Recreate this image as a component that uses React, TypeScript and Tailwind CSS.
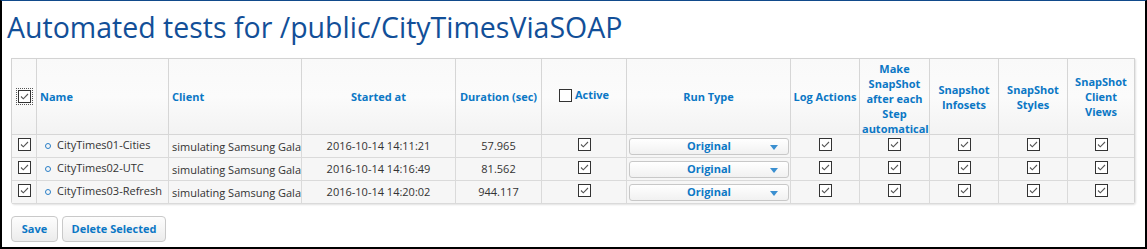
import React from "react";

const font = { fontFamily: '"Open Sans", "Noto Sans", sans-serif' };

type Test = { name: string; started: string; duration: string };

const tests: Test[] = [
  { name: "CityTimes01-Cities", started: "2016-10-14 14:11:21", duration: "57.965" },
  { name: "CityTimes02-UTC", started: "2016-10-14 14:16:49", duration: "81.562" },
  { name: "CityTimes03-Refresh", started: "2016-10-14 14:20:02", duration: "944.117" },
];

function Checkbox({ checked = true, focus = false }: { checked?: boolean; focus?: boolean }) {
  return (
    <span className={focus ? "inline-flex p-px outline-1 outline-dotted outline-[#555]" : "inline-flex"}>
      <span className="flex h-[13px] w-[13px] items-center justify-center border border-[#333] bg-white">
        {checked && (
          <svg viewBox="0 0 11 11" className="h-[11px] w-[11px]" aria-hidden>
            <path d="M2 5.5 L4.3 7.8 L9 3" fill="none" stroke="#555" strokeWidth="1.1" />
          </svg>
        )}
      </span>
    </span>
  );
}

function Head({
  children,
  left = false,
  className = "px-[3px]",
}: {
  children: React.ReactNode;
  left?: boolean;
  className?: string;
}) {
  return (
    <div
      className={`flex items-center overflow-hidden border-r border-b border-[#d6d6d6] bg-gradient-to-b from-[#f9f9f9] via-[#fbfbfb] to-[#f3f3f3] text-[11px] leading-[15px] font-bold text-[#0b77c5] ${
        left ? "justify-start" : "justify-center text-center"
      } ${className}`}
    >
      {children}
    </div>
  );
}

function Cell({
  children,
  className = "",
  last = false,
}: {
  children?: React.ReactNode;
  className?: string;
  last?: boolean;
}) {
  return (
    <div
      className={`flex h-[23px] items-center overflow-hidden whitespace-nowrap border-b border-[#dadada] bg-[#f6f6f6] text-[11px] text-[#333] ${
        last ? "" : "border-r"
      } ${className}`}
    >
      {children}
    </div>
  );
}

function RunType() {
  return (
    <div className="relative ml-[2px] flex h-[17px] w-[160px] items-center justify-center rounded-[3px] border border-[#c8c8c8] bg-gradient-to-b from-white to-[#f1f1f1] text-[11px] font-bold text-[#0b77c5]">
      Original
      <svg viewBox="0 0 8 5" className="absolute right-[10px] top-[6px] h-[5px] w-[8px]" aria-hidden>
        <path d="M0 0 H8 L4 5 Z" fill="#3a8fd0" />
      </svg>
    </div>
  );
}

function Button({ children, w }: { children: React.ReactNode; w: string }) {
  return (
    <button
      className={`h-[26px] ${w} rounded-[4px] border border-[#c9c9c9] bg-gradient-to-b from-[#fdfdfd] to-[#ececec] text-[11px] font-bold text-[#0b77c5]`}
    >
      {children}
    </button>
  );
}

export default function App() {
  return (
    <div
      style={font}
      className="h-[249px] w-[1147px] overflow-hidden border-2 border-black border-t border-t-[#114a8b] bg-white"
    >
      <h1 className="pl-[5px] pt-[8px] text-[28.5px] leading-[36px] font-normal text-[#124f98]">
        Automated tests for /public/CityTimesViaSOAP
      </h1>
      <div className="ml-[9px] mt-[13px] w-[1124px] rounded-b-[3px] border border-b-0 border-[#d3d3d3] shadow-[1px_1px_2px_rgba(0,0,0,0.12)]">
        <div className="grid grid-cols-[25px_132px_133px_154px_86px_85px_164px_69px_70px_69px_69px_66px] grid-rows-[76px]">
          <Head>
            <span className="pt-[1px]">
              <Checkbox focus />
            </span>
          </Head>
          <Head left>Name</Head>
          <Head left>Client</Head>
          <Head>Started at</Head>
          <Head>Duration (sec)</Head>
          <Head>
            <span className="flex items-start gap-[3px] pb-[2px]">
              <Checkbox checked={false} />
              <span className="-mt-[2px]">Active</span>
            </span>
          </Head>
          <Head>Run Type</Head>
          <Head className="whitespace-nowrap px-0">Log Actions</Head>
          <div className="overflow-hidden border-r border-b border-[#d6d6d6] bg-gradient-to-b from-[#f9f9f9] via-[#fbfbfb] to-[#f3f3f3] px-[2px] pt-[2px] text-center text-[11px] leading-[15px] font-bold text-[#0b77c5]">
            Make SnapShot after each Step automatically
          </div>
          <Head>
            Snapshot
            <br />
            Infosets
          </Head>
          <Head>
            SnapShot
            <br />
            Styles
          </Head>
          <div className="flex items-center justify-center border-b border-[#d6d6d6] bg-gradient-to-b from-[#f9f9f9] via-[#fbfbfb] to-[#f3f3f3] text-center text-[11px] leading-[15px] font-bold text-[#0b77c5]">
            SnapShot
            <br />
            Client
            <br />
            Views
          </div>

          {tests.map((t) => (
            <React.Fragment key={t.name}>
              <Cell className="justify-center pb-[3px]">
                <Checkbox />
              </Cell>
              <Cell className="gap-[6px] pl-[8px]">
                <span className="h-[6px] w-[6px] rounded-full border border-[#2a7fc7]" />
                <span className="-mt-[1px]">{t.name}</span>
              </Cell>
              <Cell className="pl-[3px] pt-[2px]">simulating Samsung Galaxy S5</Cell>
              <Cell className="justify-center pt-[1px]">{t.started}</Cell>
              <Cell className="justify-center pt-[1px]">{t.duration}</Cell>
              <Cell className="justify-center pb-[3px]">
                <Checkbox />
              </Cell>
              <Cell>
                <RunType />
              </Cell>
              <Cell className="justify-center pb-[3px]">
                <Checkbox />
              </Cell>
              <Cell className="justify-center pb-[3px]">
                <Checkbox />
              </Cell>
              <Cell className="justify-center pb-[3px]">
                <Checkbox />
              </Cell>
              <Cell className="justify-center pb-[3px]">
                <Checkbox />
              </Cell>
              <Cell className="justify-center pb-[3px]" last>
                <Checkbox />
              </Cell>
            </React.Fragment>
          ))}
        </div>
      </div>
      <div className="ml-[9px] mt-[12px] flex gap-[4px]">
        <Button w="w-[47px]">Save</Button>
        <Button w="w-[104px]">Delete Selected</Button>
      </div>
    </div>
  );
}
